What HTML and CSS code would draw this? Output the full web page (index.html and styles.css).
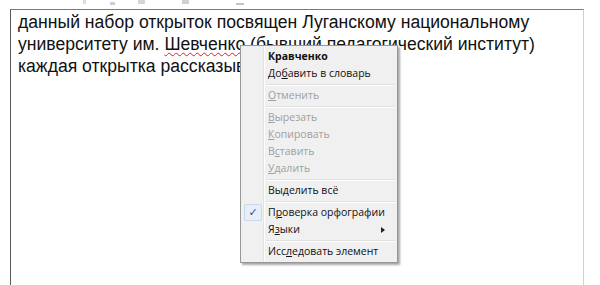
FILE: index.html
```html
<!DOCTYPE html>
<html lang="ru">
<head>
<meta charset="utf-8">
<link rel="stylesheet" href="styles.css">
</head>
<body>
<div class="toolbar">
  <span class="tb tb1"></span>
  <span class="tb tb2"></span>
  <span class="tb tb3"></span>
  <span class="tb tb4"></span>
  <span class="tb tb5"></span>
</div>
<div class="editor">
  <p class="text">данный набор открыток посвящен Луганскому национальному университету им. <span class="misspelled">Шевченко</span> (бывший педагогический институт) каждая открытка рассказывает о кафедр</p>
  <div class="menu">
    <div class="item bold"><span class="lbl">Кравченко</span></div>
    <div class="item"><span class="lbl">До<u>б</u>авить в словарь</span></div>
    <div class="sep"></div>
    <div class="item dis"><span class="lbl"><u>О</u>тменить</span></div>
    <div class="sep"></div>
    <div class="item dis"><span class="lbl"><u>В</u>ырезать</span></div>
    <div class="item dis"><span class="lbl"><u>К</u>опировать</span></div>
    <div class="item dis"><span class="lbl">В<u>с</u>тавить</span></div>
    <div class="item dis"><span class="lbl"><u>У</u>далить</span></div>
    <div class="sep"></div>
    <div class="item"><span class="lbl">Вы<u>д</u>елить всё</span></div>
    <div class="sep"></div>
    <div class="item"><span class="check">✓</span><span class="lbl">П<u>р</u>оверка орфографии</span></div>
    <div class="item"><span class="lbl">Я<u>з</u>ыки</span><span class="arrow"></span></div>
    <div class="sep"></div>
    <div class="item"><span class="lbl">Исс<u>л</u>едовать элемент</span></div>
  </div>
</div>
</body>
</html>
```
FILE: styles.css
```css
html, body {
  margin: 0;
  padding: 0;
  background: #fff;
  height: 285px;
  overflow: hidden;
}
.toolbar {
  position: relative;
  height: 9px;
}
.tb {
  position: absolute;
  top: 0;
  height: 4px;
  background: #dcdcdc;
}
.tb1 { left: 83px; width: 3px; }
.tb2 { left: 110px; width: 5px; top: 2px; height: 3px; background:#cfcfcf; }
.tb3 { left: 138px; width: 7px; background:#d6d6d6; }
.tb4 { left: 182px; width: 7px; background:#d0d0d0; }
.tb5 { left: 236px; width: 8px; top: 3px; height: 2px; background:#c4c4c4; }
.editor {
  position: relative;
  margin-left: 10px;
  width: 574px;
  height: 290px;
  border-top: 1px solid #7a7a7a;
  border-left: 1px solid #5a5a5a;
  border-right: 1px solid #d0d0d0;
  box-sizing: border-box;
}
.text {
  margin: 0;
  padding: 1px 8px 0 7px;
  font-family: "Liberation Sans", Arial, sans-serif;
  font-size: 17.6px;
  line-height: 22px;
  color: #111;
  width: 540px;
}
.misspelled {
  text-decoration: underline wavy #e02020;
  text-decoration-thickness: 1px;
  text-underline-offset: 2px;
}
.menu {
  position: absolute;
  left: 229px;
  top: 35px;
  width: 158px;
  padding: 2px 0 2px;
  background: #f0f0f0 linear-gradient(to right, transparent 22px, #e2e3e3 22px, #e2e3e3 23px, #fff 23px, #fff 24px, transparent 24px);
  border: 1px solid #979797;
  box-shadow: 2px 2px 2px rgba(0,0,0,0.35);
  font-family: "Open Sans", "Noto Sans", sans-serif;
  font-size: 10.5px;
  color: #111;
  box-sizing: border-box;
}
.item {
  position: relative;
  height: 17px;
  line-height: 17px;
  padding-left: 27px;
  white-space: nowrap;
}
.item u { text-decoration: underline; text-underline-offset: 1px; }
.bold { font-weight: 700; }
.dis { color: #a0a0a0; }
.sep {
  height: 1px;
  margin: 2px 2px 1px 25px;
  background: #e0e0e0;
  border-bottom: 1px solid #fff;
}
.check {
  position: absolute;
  left: 3px;
  top: 0;
  width: 18px;
  height: 17px;
  text-align: center;
  background: #e6eef8;
  border: 1px solid #c9d8ea;
  border-radius: 2px;
  box-sizing: border-box;
  color: #1e50a0;
  font-family: "DejaVu Sans", sans-serif;
  font-size: 11px;
  line-height: 15px;
}
.arrow {
  position: absolute;
  right: 12px;
  top: 6px;
  border-left: 4px solid #222;
  border-top: 3px solid transparent;
  border-bottom: 3px solid transparent;
}
```
